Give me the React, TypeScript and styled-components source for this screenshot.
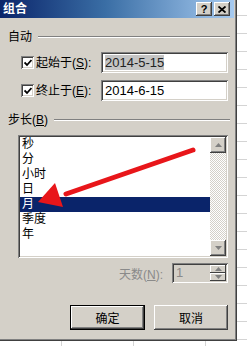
import React from 'react';
import styled, { createGlobalStyle } from 'styled-components';

const GlobalStyle = createGlobalStyle`
  html, body { margin: 0; padding: 0; }
  body {
    width: 247px;
    height: 346px;
    overflow: hidden;
    background-color: #fff;
    background-image:
      linear-gradient(to bottom, #d4d4d4 1px, transparent 1px),
      linear-gradient(to right, #d4d4d4 1px, transparent 1px);
    background-size: 100% 18px, 72px 100%;
    background-position: 0 15px, 61px 0;
    font-family: "Liberation Sans", "Noto Sans CJK SC", sans-serif;
    font-size: 12px;
  }
`;

const Dialog = styled.div`
  width: 237px;
  height: 341px;
  box-sizing: border-box;
  background: #d4d0c8;
  padding: 0 3px 3px 0;
  box-shadow: inset -1px -1px 0 #404040, inset -2px -2px 0 #808080;
  display: flex;
  flex-direction: column;
`;

const TitleBar = styled.div`
  height: 18px;
  display: flex;
  align-items: center;
  padding: 0 4px 0 3px;
  background: linear-gradient(to right, #0a246a 0%, #3a6ea5 45%, #a6caf0 100%);
`;

const Title = styled.span`
  color: #fff;
  font-weight: bold;
  font-size: 12px;
  line-height: 14px;
  flex: 1;
`;

const CaptionButton = styled.div`
  width: 16px;
  height: 14px;
  box-sizing: border-box;
  background: #d4d0c8;
  box-shadow: inset -1px -1px 0 #404040, inset 1px 1px 0 #fff, inset -2px -2px 0 #808080;
  display: flex;
  align-items: center;
  justify-content: center;
  font-weight: bold;
  font-size: 11px;
  line-height: 11px;
  color: #000;
  margin-left: ${(p: { $gap?: number }) => p.$gap ?? 0}px;
`;

const Body = styled.div`
  display: flex;
  flex-direction: column;
  padding: 0 4px 0 8px;
`;

const GroupHeader = styled.div<{ $top: number }>`
  display: flex;
  align-items: center;
  height: 14px;
  line-height: 14px;
  margin-top: ${(p) => p.$top}px;
  color: #000;
`;

const Rule = styled.div`
  flex: 1;
  height: 0;
  border-top: 1px solid #808080;
  border-bottom: 1px solid #fff;
  margin-left: 6px;
`;

const CheckRow = styled.div<{ $top: number }>`
  display: flex;
  align-items: center;
  height: 21px;
  margin-top: ${(p) => p.$top}px;
  padding: 0 2px 0 13px;
`;

const CheckBox = styled.div`
  width: 13px;
  height: 13px;
  box-sizing: border-box;
  background: #fff;
  box-shadow: inset 1px 1px 0 #808080, inset -1px -1px 0 #fff, inset 2px 2px 0 #404040, inset -2px -2px 0 #d4d0c8;
  display: flex;
  align-items: center;
  justify-content: center;
`;

const Label = styled.span`
  margin-left: 2px;
  color: #000;
  line-height: 14px;
`;

const TextBox = styled.div`
  margin-left: auto;
  width: 127px;
  height: 21px;
  box-sizing: border-box;
  background: #fff;
  box-shadow: inset 1px 1px 0 #808080, inset -1px -1px 0 #fff, inset 2px 2px 0 #404040, inset -2px -2px 0 #d4d0c8;
  display: flex;
  align-items: center;
  padding-left: 4px;
  font-size: 13px;
  color: #000;
`;

const Selected = styled.span`
  background: #c4c4c4;
  color: #222;
  line-height: 15px;
`;

const ListWrap = styled.div`
  position: relative;
  margin: 8px 2px 0 10px;
  height: 123px;
  box-sizing: border-box;
  background: #fff;
  box-shadow: inset 1px 1px 0 #808080, inset -1px -1px 0 #fff, inset 2px 2px 0 #404040, inset -2px -2px 0 #d4d0c8;
  padding: 2px;
  display: flex;
`;

const Items = styled.div`
  flex: 1;
  display: flex;
  flex-direction: column;
`;

const Item = styled.div<{ $sel?: boolean }>`
  height: 15px;
  line-height: 15px;
  padding-left: 2px;
  background: ${(p) => (p.$sel ? '#0a246a' : 'transparent')};
  color: ${(p) => (p.$sel ? '#fff' : '#000')};
`;

const ScrollBar = styled.div`
  width: 16px;
  display: flex;
  flex-direction: column;
  background: repeating-conic-gradient(#d4d0c8 0% 25%, #fff 0% 50%) 0 0 / 2px 2px;
`;

const ScrollBtn = styled.div`
  width: 16px;
  height: 16px;
  box-sizing: border-box;
  background: #d4d0c8;
  box-shadow: inset -1px -1px 0 #404040, inset 1px 1px 0 #fff, inset -2px -2px 0 #808080;
  display: flex;
  align-items: center;
  justify-content: center;
`;

const Track = styled.div`
  flex: 1;
`;

const ArrowOverlay = styled.svg`
  position: absolute;
  left: 0;
  top: 0;
  pointer-events: none;
`;

const DaysRow = styled.div`
  display: flex;
  align-items: center;
  justify-content: flex-end;
  margin: 5px 2px 0 0;
  height: 20px;
`;

const DisabledLabel = styled.span`
  color: #8a8a8a;
  margin-right: 9px;
`;

const SpinBox = styled.div`
  width: 56px;
  height: 20px;
  box-sizing: border-box;
  background: #d4d0c8;
  box-shadow: inset 1px 1px 0 #808080, inset -1px -1px 0 #fff, inset 2px 2px 0 #404040, inset -2px -2px 0 #d4d0c8;
  display: flex;
  padding: 2px;
`;

const SpinText = styled.div`
  flex: 1;
  color: #8a8a8a;
  font-size: 13px;
  line-height: 16px;
  padding-left: 2px;
`;

const SpinButtons = styled.div`
  width: 16px;
  display: flex;
  flex-direction: column;
`;

const SpinBtn = styled.div`
  flex: 1;
  background: #d4d0c8;
  box-shadow: inset -1px -1px 0 #404040, inset 1px 1px 0 #fff;
  display: flex;
  align-items: center;
  justify-content: center;
`;

const ButtonRow = styled.div`
  display: flex;
  justify-content: flex-end;
  gap: 9px;
  margin: 22px 2px 0 0;
`;

const PushButton = styled.div<{ $default?: boolean; $w: number }>`
  width: ${(p) => p.$w}px;
  height: 25px;
  box-sizing: border-box;
  background: #d4d0c8;
  display: flex;
  align-items: center;
  justify-content: center;
  color: #000;
  border: ${(p) => (p.$default ? '1px solid #000' : 'none')};
  box-shadow: inset -1px -1px 0 #404040, inset 1px 1px 0 #fff, inset -2px -2px 0 #808080;
`;

const Tri = ({ up, color = '#808080' }: { up: boolean; color?: string }) => (
  <svg width="7" height="4" viewBox="0 0 7 4">
    {up ? (
      <polygon points="3.5,0 7,4 0,4" fill={color} />
    ) : (
      <polygon points="0,0 7,0 3.5,4" fill={color} />
    )}
  </svg>
);

export default function App() {
  return (
    <>
      <GlobalStyle />
      <Dialog>
        <TitleBar>
          <Title>组合</Title>
          <CaptionButton>?</CaptionButton>
          <CaptionButton $gap={2}>
            <svg width="8" height="7" viewBox="0 0 8 7">
              <path d="M0.5 0.5 L7.5 6.5 M7.5 0.5 L0.5 6.5" stroke="#000" strokeWidth="1.8" />
            </svg>
          </CaptionButton>
        </TitleBar>
        <Body>
          <GroupHeader $top={12}>
            <span>自动</span>
            <Rule />
          </GroupHeader>
          <CheckRow $top={8}>
            <CheckBox>
              <svg width="8" height="8" viewBox="0 0 8 8">
                <path d="M0.5 3.5 L3 6 L7.5 1" stroke="#000" strokeWidth="1.8" fill="none" />
              </svg>
            </CheckBox>
            <Label>
              起始于(<u>S</u>):
            </Label>
            <TextBox>
              <Selected>2014-5-15</Selected>
            </TextBox>
          </CheckRow>
          <CheckRow $top={7}>
            <CheckBox>
              <svg width="8" height="8" viewBox="0 0 8 8">
                <path d="M0.5 3.5 L3 6 L7.5 1" stroke="#000" strokeWidth="1.8" fill="none" />
              </svg>
            </CheckBox>
            <Label>
              终止于(<u>E</u>):
            </Label>
            <TextBox>2014-6-15</TextBox>
          </CheckRow>
          <GroupHeader $top={12}>
            <span>
              步长(<u>B</u>)
            </span>
            <Rule />
          </GroupHeader>
          <ListWrap>
            <Items>
              <Item>秒</Item>
              <Item>分</Item>
              <Item>小时</Item>
              <Item>日</Item>
              <Item $sel>月</Item>
              <Item>季度</Item>
              <Item>年</Item>
            </Items>
            <ScrollBar>
              <ScrollBtn>
                <Tri up />
              </ScrollBtn>
              <Track />
              <ScrollBtn>
                <Tri up={false} />
              </ScrollBtn>
            </ScrollBar>
            <ArrowOverlay width="210" height="123" viewBox="0 0 210 123">
              <line x1="175" y1="15" x2="48" y2="59" stroke="#e8161a" strokeWidth="5" strokeLinecap="round" />
              <polygon points="20,67 37,48 41,60 45,72" fill="#e8161a" />
            </ArrowOverlay>
          </ListWrap>
          <DaysRow>
            <DisabledLabel>
              天数(<u>N</u>):
            </DisabledLabel>
            <SpinBox>
              <SpinText>1</SpinText>
              <SpinButtons>
                <SpinBtn>
                  <Tri up />
                </SpinBtn>
                <SpinBtn>
                  <Tri up={false} />
                </SpinBtn>
              </SpinButtons>
            </SpinBox>
          </DaysRow>
          <ButtonRow>
            <PushButton $default $w={75}>确定</PushButton>
            <PushButton $w={74}>取消</PushButton>
          </ButtonRow>
        </Body>
      </Dialog>
    </>
  );
}
